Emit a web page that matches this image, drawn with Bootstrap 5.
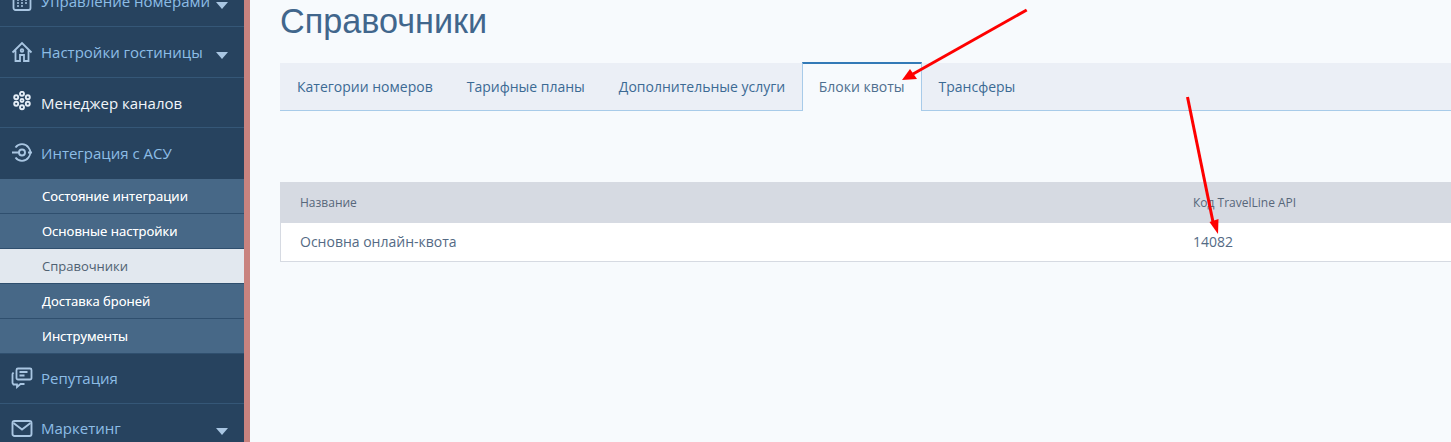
<!DOCTYPE html>
<html lang="ru">
<head>
    <meta charset="UTF-8">
    <title>Справочники</title>
    <link href="https://cdn.jsdelivr.net/npm/bootstrap@5.3.0/dist/css/bootstrap.min.css" rel="stylesheet">
    <style>
        html, body {
            height: 442px;
            overflow: hidden;
        }
        body {
            background-color: #f7fafd;
            font-family: "Open Sans", sans-serif;
            position: relative;
        }
        .side-panel {
            width: 250px;
            height: 442px;
            flex-shrink: 0;
            overflow: hidden;
            background-color: #27435f;
            border-right: 6px solid #c9837f;
        }
        .side-scroll {
            margin-top: -23px;
        }
        .side-item {
            height: 50.4px;
            padding-left: 41px;
            padding-right: 16px;
            position: relative;
            color: #8dbde6;
            font-size: 15px;
            border-bottom: 1px solid #355777;
        }
        .side-item.is-bright {
            color: #f2f6fa;
            padding-top: 2px;
        }
        .side-item.is-open {
            border-bottom: 0;
        }
        .side-item.is-lower {
            padding-bottom: 1px;
        }
        .side-icon {
            position: absolute;
            left: 11px;
            top: 50%;
            transform: translateY(-50%);
            width: 22px;
            height: 22px;
        }
        .side-caret {
            width: 0;
            height: 0;
            border-left: 6.5px solid transparent;
            border-right: 6.5px solid transparent;
            border-top: 7px solid #a9c6e2;
            margin-top: 7px;
        }
        .sub-item {
            height: 35px;
            padding-left: 42px;
            padding-top: 2px;
            background-color: #476887;
            border-bottom: 1px solid #2f4f6e;
            color: #fff;
            font-size: 13px;
            font-weight: 500;
            text-shadow: 0 0 .4px rgba(255, 255, 255, .6);
        }
        .sub-item.is-current {
            background-color: #e2e8ef;
            color: #4f6172;
            font-weight: 400;
            text-shadow: none;
        }
        .page-area {
            flex-grow: 1;
            padding-left: 30px;
            min-width: 0;
        }
        .page-title {
            font-family: "Liberation Sans", Arial, sans-serif;
            font-size: 34.2px;
            line-height: 43px;
            color: #41668c;
            margin: 0 0 20px;
            font-weight: 400;
        }
        .tabs-bar {
            background-color: #ebeff6;
            border-bottom: 1px solid #a8cbe9;
            height: 48px;
            margin-bottom: 71px;
        }
        .tabs-bar .nav-link {
            height: 48px;
            padding: 14px 17px 0;
            font-size: 14px;
            line-height: 20px;
            color: #3b6a94;
            border: 0;
            border-radius: 0;
            background: none;
            margin: 0;
        }
        .tabs-bar .nav-link.active {
            background-color: #f7fafd;
            color: #4f6f8f;
            border-left: 1px solid #a8cbe9;
            border-right: 1px solid #a8cbe9;
            border-top: 2px solid #337ab7;
            padding-top: 13px;
            padding-left: 15.5px;
            padding-right: 16px;
            height: 49px;
            margin-top: -1px;
        }
        .quota-table {
            table-layout: fixed;
            border-collapse: separate;
            border-spacing: 0;
            margin: 0;
        }
        .quota-table th {
            height: 41px;
            background-color: #d6dae2;
            color: #57677a;
            font-size: 12px;
            font-weight: 400;
            padding: 0 0 0 20px;
            vertical-align: middle;
            border: 0;
        }
        .quota-table td {
            height: 39px;
            background-color: #fff;
            color: #546a84;
            font-size: 14px;
            padding: 0 0 1px 20px;
            vertical-align: middle;
            border-bottom: 1px solid #d6dae2;
        }
        .quota-table td:first-child {
            border-left: 1px solid #d6dae2;
            padding-left: 19px;
        }
        .code-col {
            width: 278px;
        }
        .arrow-layer {
            position: absolute;
            left: 0;
            top: 0;
            pointer-events: none;
        }
    </style>
</head>
<body>
<div class="d-flex">
    <aside class="side-panel">
        <div class="side-scroll">
            <div class="side-item d-flex align-items-center justify-content-between">
                <span>Управление номерами</span><span class="side-caret"></span>
                <svg class="side-icon" viewBox="0 0 22 22" fill="none" stroke="#a9c6e2" stroke-width="1.8"><rect x="2.500" y="4" width="17" height="15" rx="2"/><path d="M6 9h2M10 9h2M14 9h2M6 12h2M10 12h2M14 12h2M6 15h2M10 15h2" stroke-width="1.500"/></svg>
            </div>
            <div class="side-item d-flex align-items-center justify-content-between">
                <span>Настройки гостиницы</span><span class="side-caret"></span>
                <svg class="side-icon" viewBox="0 0 22 22" fill="none" stroke="#a9c6e2" stroke-width="1.8"><path d="M1.500 11.500 11 2l9.500 9.500M4.500 9.500V20h4.500v-6h4v6h4.500V9.500"/><circle cx="11" cy="9.500" r="1.300"/></svg>
            </div>
            <div class="side-item is-bright d-flex align-items-center">
                <span>Менеджер каналов</span>
                <svg class="side-icon" viewBox="0 0 22 22" fill="#27435f" stroke="#e4edf6" stroke-width="1.900"><circle cx="11" cy="2.800" r="2"/><circle cx="11" cy="16.200" r="2"/><circle cx="5.200" cy="6.200" r="2"/><circle cx="16.800" cy="6.200" r="2"/><circle cx="5.200" cy="12.800" r="2"/><circle cx="16.800" cy="12.800" r="2"/><circle cx="11" cy="9.500" r="1.500"/></svg>
            </div>
            <div class="side-item is-open d-flex align-items-center">
                <span>Интеграция с АСУ</span>
                <svg class="side-icon" viewBox="0 0 22 22" fill="none" stroke="#a9c6e2" stroke-width="1.900"><path d="M4.500 5.500a8 8 0 0 1 13 0l0 0a8 8 0 0 1 0 10 8 8 0 0 1-13 0"/><path d="M1 10.500h7M17 10.500h4"/><circle cx="11" cy="10.500" r="3"/></svg>
            </div>
            <div class="sub-item d-flex align-items-center">Состояние интеграции</div>
            <div class="sub-item d-flex align-items-center">Основные настройки</div>
            <div class="sub-item is-current d-flex align-items-center">Справочники</div>
            <div class="sub-item d-flex align-items-center">Доставка броней</div>
            <div class="sub-item d-flex align-items-center">Инструменты</div>
            <div class="side-item is-lower d-flex align-items-center">
                <span>Репутация</span>
                <svg class="side-icon" viewBox="0 0 22 22" fill="none" stroke="#a9c6e2" stroke-width="1.800"><path d="M7 1.500h12a1.500 1.500 0 0 1 1.500 1.500v8a1.500 1.500 0 0 1-1.500 1.500H7A1.500 1.500 0 0 1 5.500 11V3A1.500 1.500 0 0 1 7 1.500zM8.500 5h8M8.500 8.500h5"/><path d="M2.500 5.500 1.500 7v9l1 1.500h3.500V20l3.500-3h4"/></svg>
            </div>
            <div class="side-item is-lower d-flex align-items-center justify-content-between">
                <span>Маркетинг</span><span class="side-caret"></span>
                <svg class="side-icon" viewBox="0 0 22 22" fill="none" stroke="#a9c6e2" stroke-width="1.900"><rect x="1.500" y="3" width="19" height="15" rx="2"/><path d="M2.500 5 11 11.500 19.500 5"/></svg>
            </div>
        </div>
    </aside>
    <main class="page-area">
        <h1 class="page-title">Справочники</h1>
        <div class="tabs-bar">
            <ul class="nav">
                <li class="nav-item"><a class="nav-link" href="#">Категории номеров</a></li>
                <li class="nav-item"><a class="nav-link" href="#">Тарифные планы</a></li>
                <li class="nav-item"><a class="nav-link" href="#">Дополнительные услуги</a></li>
                <li class="nav-item"><a class="nav-link active" href="#">Блоки квоты</a></li>
                <li class="nav-item"><a class="nav-link" href="#">Трансферы</a></li>
            </ul>
        </div>
        <table class="table quota-table">
            <thead>
                <tr><th>Название</th><th class="code-col">Код TravelLine API</th></tr>
            </thead>
            <tbody>
                <tr><td>Основна онлайн-квота</td><td>14082</td></tr>
            </tbody>
        </table>
    </main>
</div>
<svg class="arrow-layer" width="1451" height="442" viewBox="0 0 1451 442">
    <path d="M1026.700 10 913 74" stroke="#fe0000" stroke-width="3" fill="none"/>
    <path d="M902 80 910 69 917 79z" fill="#fe0000"/>
    <path d="M1187.500 97 1213 222" stroke="#fe0000" stroke-width="3" fill="none"/>
    <path d="M1218 234 1209.500 222 1218.500 219z" fill="#fe0000"/>
</svg>
<script src="https://cdn.jsdelivr.net/npm/bootstrap@5.3.0/dist/js/bootstrap.bundle.min.js"></script>
</body>
</html>
